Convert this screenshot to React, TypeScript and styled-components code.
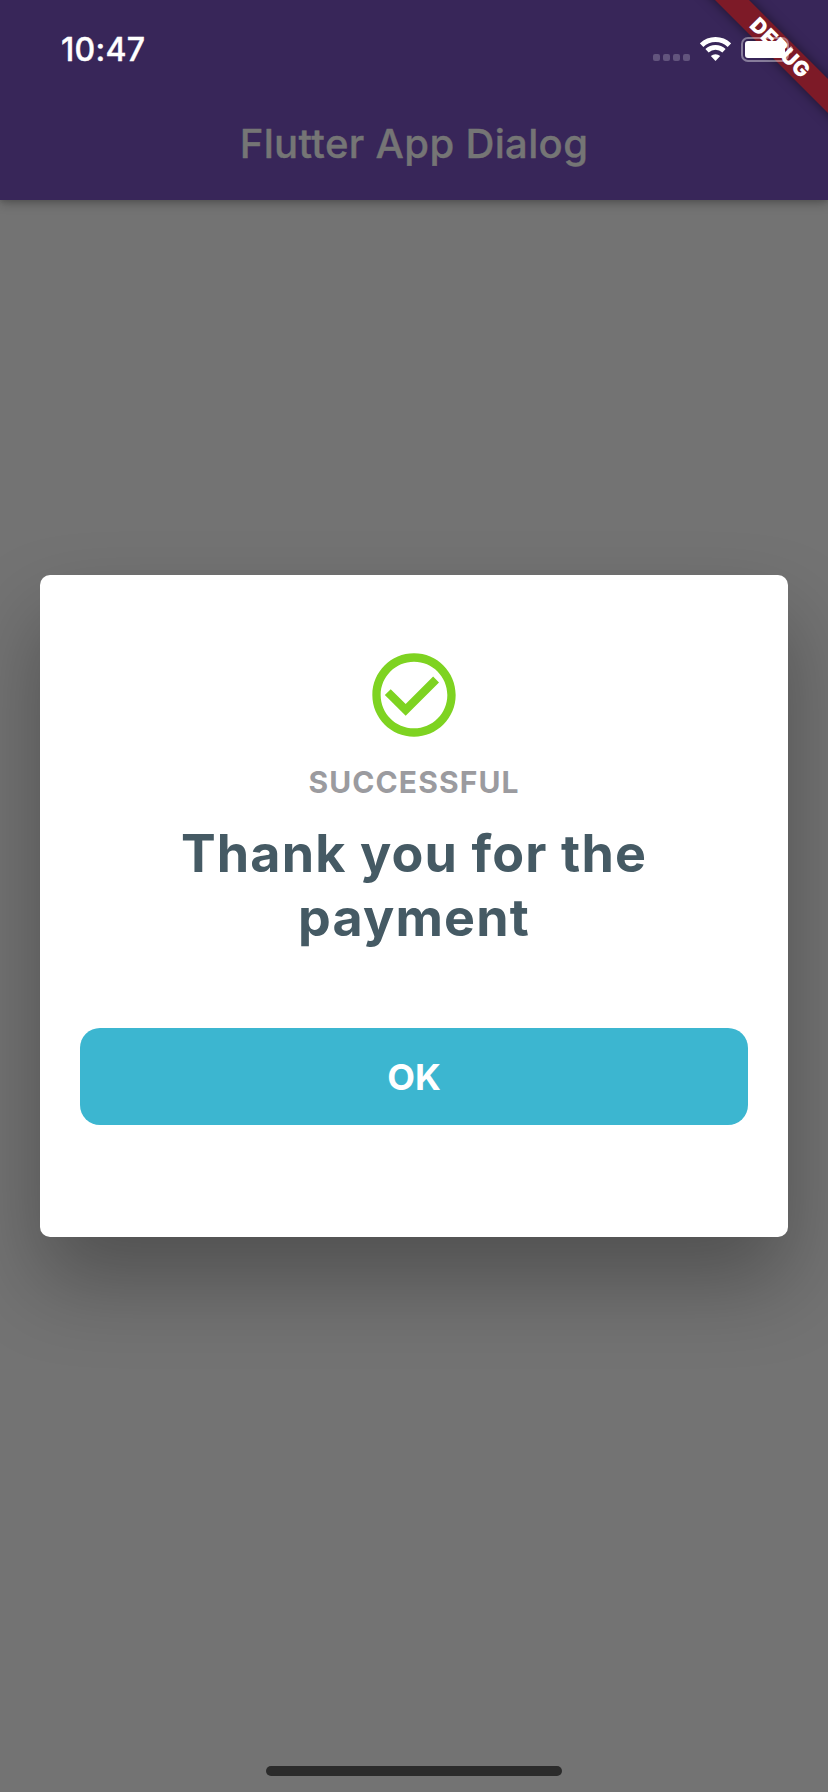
import React from 'react';
import styled, { createGlobalStyle } from 'styled-components';

const GlobalStyle = createGlobalStyle`
  *, *::before, *::after { box-sizing: border-box; }
  body { margin: 0; background: #737373; }
`;

const Screen = styled.div`
  position: relative;
  display: flex;
  flex-direction: column;
  width: 828px;
  height: 1792px;
  overflow: hidden;
  background: #737373;
  font-family: Inter, Roboto, sans-serif;
`;

const Header = styled.header`
  flex: none;
  height: 200px;
  background: #382659;
  box-shadow: 0 4px 10px rgba(0, 0, 0, 0.22), 0 2px 4px rgba(0, 0, 0, 0.1);
`;

const StatusBar = styled.div`
  position: relative;
  z-index: 3;
  display: flex;
  justify-content: space-between;
  height: 88px;
  padding: 0 34px 0 61px;
`;

const Time = styled.span`
  padding-top: 30px;
  font-size: 32px;
  line-height: 40px;
  font-weight: 500;
  letter-spacing: 0.3px;
  color: #fff;
  -webkit-text-stroke: 0.4px #fff;
`;

const Indicators = styled.div`
  display: flex;
  align-items: flex-start;
  padding-top: 37px;
`;

const SignalDots = styled.div`
  display: flex;
  gap: 3px;
  margin: 17px 10px 0 0;
`;

const Dot = styled.span`
  width: 7px;
  height: 7px;
  border-radius: 2px;
  background: #62547d;
`;

const WifiIcon = styled.svg`
  width: 31px;
  height: 24px;
  margin-right: 10px;
`;

const BatteryIcon = styled.svg`
  width: 53px;
  height: 25px;
`;

const AppBar = styled.div`
  display: flex;
  justify-content: center;
  height: 112px;
  padding-top: 32px;
`;

const AppTitle = styled.h1`
  margin: 0;
  font-size: 40px;
  line-height: 48px;
  font-weight: 500;
  letter-spacing: 0.35px;
  color: #757575;
  -webkit-text-stroke: 0.4px #757575;
`;

const DebugBanner = styled.div`
  position: absolute;
  z-index: 2;
  top: 36px;
  left: 660px;
  display: flex;
  align-items: center;
  justify-content: center;
  width: 240px;
  height: 24px;
  transform: rotate(45deg);
  background: #7d1a27;
  box-shadow: 0 0 12px rgba(0, 0, 0, 0.5);
  color: #fff;
  font-size: 21px;
  line-height: 24px;
  font-weight: 900;
  letter-spacing: 0.4px;
`;

const Body = styled.main`
  display: flex;
  flex: 1;
  flex-direction: column;
  align-items: center;
  justify-content: space-between;
  padding: 374.5px 40px 16px;
`;

const Dialog = styled.section`
  display: flex;
  flex-direction: column;
  align-items: center;
  width: 748px;
  height: 662.5px;
  padding: 70.5px 40px 0;
  border-radius: 10px;
  background: #fff;
  box-shadow: 0 44px 84px rgba(0, 0, 0, 0.3);
`;

const CheckIcon = styled.svg`
  width: 100px;
  height: 100px;
  fill: #7ed321;
`;

const Status = styled.p`
  margin: 18px 0 0;
  font-size: 30px;
  line-height: 38px;
  font-weight: 700;
  letter-spacing: 1.1px;
  color: #9b9b9f;
`;

const Message = styled.h2`
  width: 560px;
  margin: 21px 0 0;
  font-size: 52px;
  line-height: 64px;
  font-weight: 700;
  letter-spacing: 1.15px;
  text-align: center;
  color: #455a64;
`;

const OkButton = styled.button`
  width: 668px;
  height: 97px;
  margin-top: 77.5px;
  padding: 2px 0 0;
  border: 0;
  border-radius: 20px;
  background: #3cb6d0;
  color: #fff;
  font-family: inherit;
  font-size: 36px;
  font-weight: 700;
`;

const HomeIndicator = styled.div`
  width: 296px;
  height: 10px;
  border-radius: 5px;
  background: #2b2b2b;
`;

export default function App() {
  return (
    <>
      <GlobalStyle />
      <Screen>
        <Header>
          <StatusBar>
            <Time>10:47</Time>
            <Indicators>
              <SignalDots>
                <Dot />
                <Dot />
                <Dot />
                <Dot />
              </SignalDots>
              <WifiIcon viewBox="0 0 31 24" fill="none">
                <path d="M1.6 8.2A20 20 0 0 1 29.4 8.2" stroke="#fff" strokeWidth="5" />
                <path d="M7 13.8A12.5 12.5 0 0 1 24 13.8" stroke="#fff" strokeWidth="4.8" />
                <path d="M10.8 19A7 7 0 0 1 20.2 19L15.5 24Z" fill="#fff" />
              </WifiIcon>
              <BatteryIcon viewBox="0 0 53 25" fill="none">
                <rect x="1" y="1" width="46" height="23" rx="6" stroke="#fff" strokeOpacity="0.4" strokeWidth="2" />
                <rect x="4" y="4" width="40" height="17" rx="3" fill="#fff" />
                <path d="M49.5 8.5C53 10 53 15 49.5 16.5Z" fill="#fff" fillOpacity="0.4" />
              </BatteryIcon>
            </Indicators>
          </StatusBar>
          <AppBar>
            <AppTitle>Flutter App Dialog</AppTitle>
          </AppBar>
        </Header>
        <DebugBanner>DEBUG</DebugBanner>
        <Body>
          <Dialog>
            <CheckIcon viewBox="0 0 24 24">
              <path d="M16.59 7.58 10 14.17l-3.59-3.58L5 12l5 5 8-8zM12 2C6.48 2 2 6.48 2 12s4.48 10 10 10 10-4.48 10-10S17.52 2 12 2zm0 18c-4.42 0-8-3.58-8-8s3.58-8 8-8 8 3.58 8 8-3.58 8-8 8z" />
            </CheckIcon>
            <Status>SUCCESSFUL</Status>
            <Message>Thank you for the payment</Message>
            <OkButton>OK</OkButton>
          </Dialog>
          <HomeIndicator />
        </Body>
      </Screen>
    </>
  );
}
